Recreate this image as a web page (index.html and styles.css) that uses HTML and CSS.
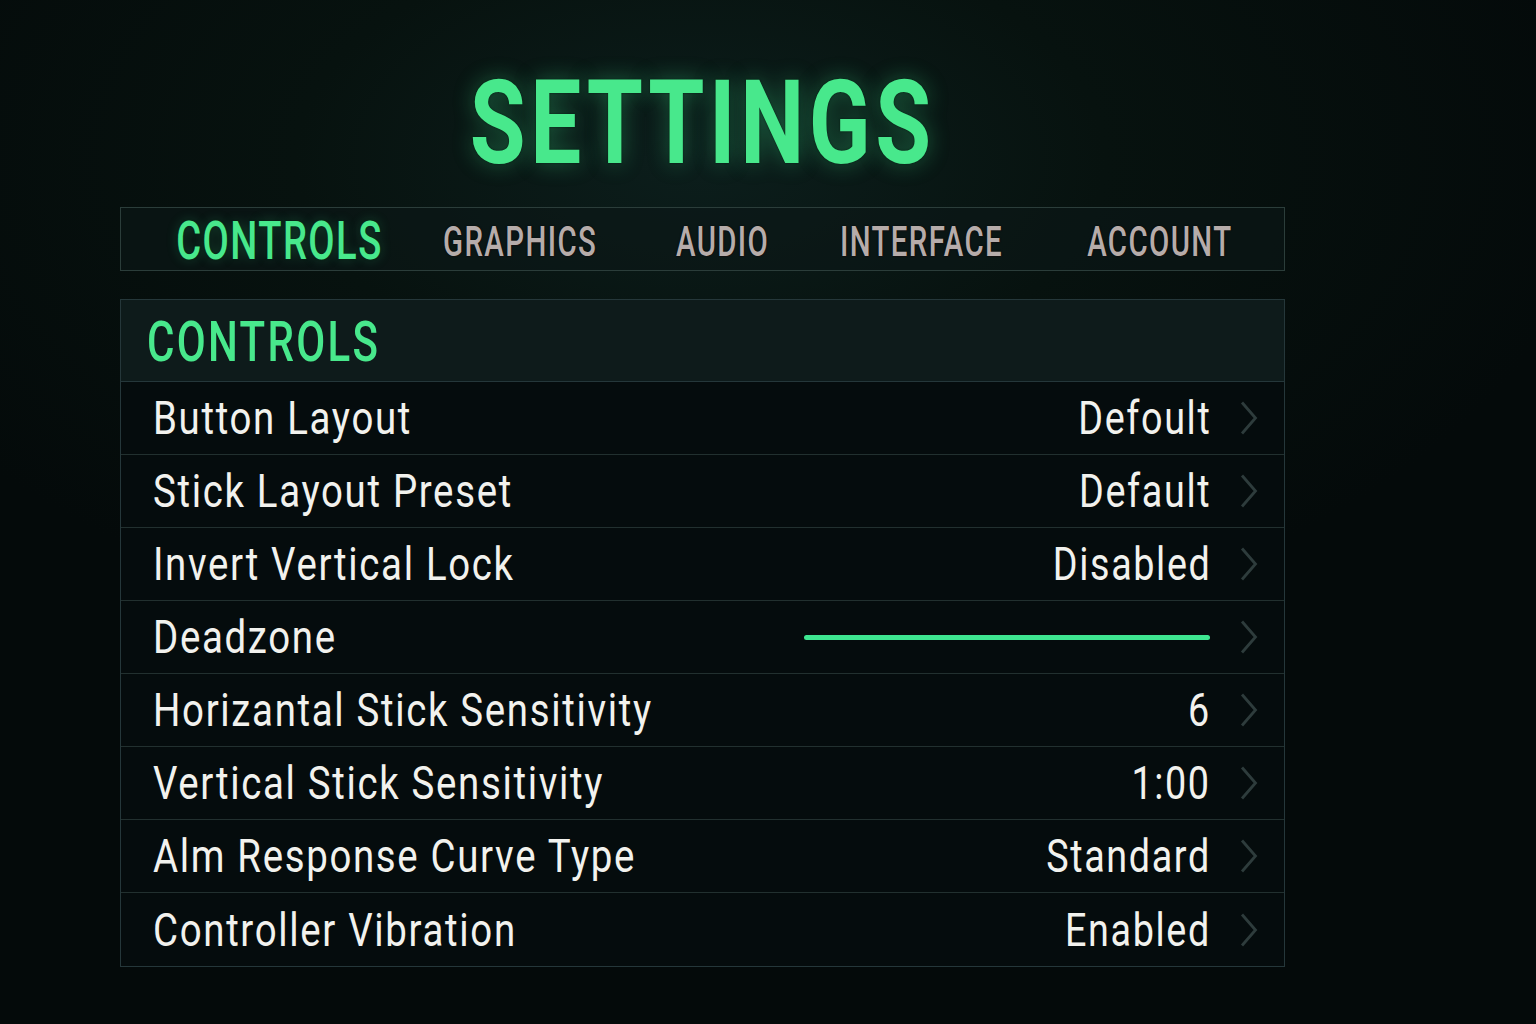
FILE: index.html
```html
<!DOCTYPE html>
<html lang="en">
<head>
<meta charset="utf-8">
<title>Settings</title>
<link rel="stylesheet" href="styles.css">
</head>
<body>
<main class="screen">
  <h1 class="title"><span class="sq">SETTINGS</span></h1>
  <nav class="tabs">
    <span class="tab active"><span class="sq">CONTROLS</span></span>
    <span class="tab"><span class="sq">GRAPHICS</span></span>
    <span class="tab"><span class="sq">AUDIO</span></span>
    <span class="tab"><span class="sq">INTERFACE</span></span>
    <span class="tab"><span class="sq">ACCOUNT</span></span>
  </nav>
  <section class="panel">
    <header class="panel-head"><span class="sq">CONTROLS</span></header>
    <div class="row"><span class="label"><span class="sq">Button Layout</span></span><span class="value"><span class="sq">Defoult</span></span><svg class="chev" viewBox="0 0 18 34"><path d="M2 1.5 L15.5 17 L2 32.5"/></svg></div>
    <div class="row"><span class="label"><span class="sq">Stick Layout Preset</span></span><span class="value"><span class="sq">Default</span></span><svg class="chev" viewBox="0 0 18 34"><path d="M2 1.5 L15.5 17 L2 32.5"/></svg></div>
    <div class="row"><span class="label"><span class="sq">Invert Vertical Lock</span></span><span class="value"><span class="sq">Disabled</span></span><svg class="chev" viewBox="0 0 18 34"><path d="M2 1.5 L15.5 17 L2 32.5"/></svg></div>
    <div class="row"><span class="label"><span class="sq">Deadzone</span></span><span class="slider"></span><svg class="chev" viewBox="0 0 18 34"><path d="M2 1.5 L15.5 17 L2 32.5"/></svg></div>
    <div class="row"><span class="label"><span class="sq">Horizantal Stick Sensitivity</span></span><span class="value"><span class="sq">6</span></span><svg class="chev" viewBox="0 0 18 34"><path d="M2 1.5 L15.5 17 L2 32.5"/></svg></div>
    <div class="row"><span class="label"><span class="sq">Vertical Stick Sensitivity</span></span><span class="value"><span class="sq">1:00</span></span><svg class="chev" viewBox="0 0 18 34"><path d="M2 1.5 L15.5 17 L2 32.5"/></svg></div>
    <div class="row"><span class="label"><span class="sq">Alm Response Curve Type</span></span><span class="value"><span class="sq">Standard</span></span><svg class="chev" viewBox="0 0 18 34"><path d="M2 1.5 L15.5 17 L2 32.5"/></svg></div>
    <div class="row"><span class="label"><span class="sq">Controller Vibration</span></span><span class="value"><span class="sq">Enabled</span></span><svg class="chev" viewBox="0 0 18 34"><path d="M2 1.5 L15.5 17 L2 32.5"/></svg></div>
  </section>
</main>
</body>
</html>
```

FILE: styles.css
```css
* { box-sizing: border-box; }
html, body { margin: 0; height: 100%; }
body {
  background: radial-gradient(ellipse 900px 500px at 700px 160px, #0c1e1c 0%, #07120f 45%, #040a0a 100%);
  font-family: Roboto, "Liberation Sans", sans-serif;
  color: #f2f2ee;
  overflow: hidden;
}
.sq {
  display: inline-block;
  white-space: nowrap;
  transform-origin: center;
}
.screen {
  width: 1165px;
  margin-left: 120px;
  display: flex;
  flex-direction: column;
}
.title {
  margin: 58px 0 0;
  height: 149px;
  text-align: center;
  font-size: 117px;
  line-height: 130px;
  font-weight: 700;
  letter-spacing: 6px;
  color: #48e88c;
  text-shadow: 0 0 2px #02140a, 0 0 24px rgba(60, 230, 140, 0.35);
}
.title .sq { transform: scaleX(0.775); }
.tabs {
  height: 64px;
  border: 1.5px solid #2b3d3a;
  background: rgba(12, 24, 23, 0.6);
  display: grid;
  grid-template-columns: 240px 243px 161px 237px 239px;
  align-items: center;
  justify-items: center;
  padding-left: 38px;
}
.tab {
  font-size: 42px;
  font-weight: 500;
  letter-spacing: 2px;
  color: #b6acaa;
  padding-top: 3px;
  text-shadow: 0 0 2px #000, 1px 1px 0 #141414;
}
.tab .sq { transform: scaleX(0.70); }
.tab.active {
  font-size: 53px;
  padding-top: 2px;
  color: #48e88c;
  text-shadow: 0 0 2px #021, 0 0 14px rgba(60, 230, 140, 0.25);
}
.tab.active .sq { transform: scaleX(0.72); }
.panel {
  margin-top: 28px;
  border: 1.5px solid #25373a;
  background: #050c0d;
}
.panel-head {
  height: 82px;
  display: flex;
  align-items: center;
  padding-left: 26px;
  padding-top: 3px;
  font-size: 55px;
  font-weight: 500;
  letter-spacing: 3px;
  color: #48e88c;
  background: #0e1b1b;
  border-bottom: 1.5px solid #25373a;
}
.panel-head .sq { transform: scaleX(0.765); transform-origin: left center; }
.row {
  height: 73px;
  display: flex;
  align-items: center;
  padding: 0 26px 0 32px;
  border-bottom: 1.5px solid #22302f;
  font-size: 46px;
  letter-spacing: 2px;
}
.row:last-child { border-bottom: none; }
.label { flex: 1; white-space: nowrap; }
.label .sq { transform: scaleX(0.835); transform-origin: left center; }
.value { white-space: nowrap; margin-right: -3px; }
.value .sq { transform: scaleX(0.82); transform-origin: right center; }
.slider {
  width: 406px;
  height: 5px;
  border-radius: 3px;
  background: #3ee690;
  margin-right: -2px;
}
.chev {
  width: 18px;
  height: 34px;
  margin-left: 32px;
  flex-shrink: 0;
}
.chev path {
  fill: none;
  stroke: #2e3c3c;
  stroke-width: 2.8;
}
```
